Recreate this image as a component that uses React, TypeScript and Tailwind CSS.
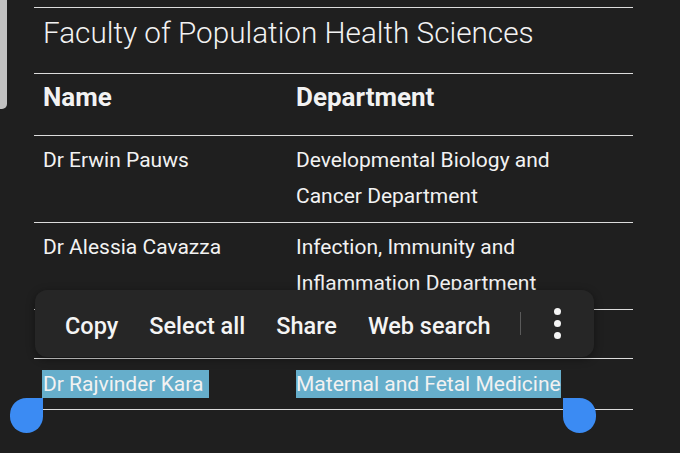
import React from "react";

type Row = { name: string; dept: string[]; pad: string; selected?: boolean };

const rows: Row[] = [
  { name: "Dr Erwin Pauws", dept: ["Developmental Biology and", "Cancer Department"], pad: "pt-[6px] pb-[8px]" },
  { name: "Dr Alessia Cavazza", dept: ["Infection, Immunity and", "Inflammation Department"], pad: "pt-[6px] pb-[8px]" },
  { name: "Dr Ruth Gilbert", dept: ["Population, Policy and Practice"], pad: "pt-[6px] pb-[6px]" },
  { name: "Dr Rajvinder Kara", dept: ["Maternal and Fetal Medicine"], pad: "pt-[7px] pb-[7px]", selected: true },
];

function SelectionHandle({ side }: { side: "left" | "right" }) {
  return (
    <div
      className={
        side === "left"
          ? "absolute left-[10px] top-[398px] w-[33px] h-[35px] rounded-full rounded-tr-none bg-[#3b8bf3]"
          : "absolute left-[563px] top-[398px] w-[33px] h-[35px] rounded-full rounded-tl-none bg-[#3b8bf3]"
      }
    />
  );
}

function TextActionMenu() {
  return (
    <div className="absolute left-[35px] top-[290px] w-[559px] h-[67px] rounded-[12px] bg-[#262626] shadow-[0_2px_8px_rgba(0,0,0,0.4)] flex items-center pl-[30px] pt-[6px] text-[23.5px] font-medium text-[#f4f4f4]">
      <span>Copy</span>
      <span className="ml-[31px]">Select all</span>
      <span className="ml-[31px]">Share</span>
      <span className="ml-[31px]">Web search</span>
      <div className="ml-auto mr-[33px] flex items-center -mt-[6px]">
        <div className="w-px h-[23px] bg-[#5a5a5a]" />
        <div className="ml-[33px] flex flex-col gap-[5px]">
          <div className="w-[7px] h-[7px] rounded-full bg-[#f4f4f4]" />
          <div className="w-[7px] h-[7px] rounded-full bg-[#f4f4f4]" />
          <div className="w-[7px] h-[7px] rounded-full bg-[#f4f4f4]" />
        </div>
      </div>
    </div>
  );
}

export default function App() {
  return (
    <div className="relative w-[680px] h-[453px] overflow-hidden bg-[#1f1f1f] text-[#f2f2f2] font-['Roboto',sans-serif]">
      {/* page scrollbar */}
      <div className="absolute left-0 top-0 w-[7px] h-[109px] rounded-br-[5px] bg-[#c2c2c2]" />

      <div className="ml-[34px] w-[599px] pt-[7px]">
        <div className="border-t border-[#dcdcdc] h-[66px] pt-[5px] pl-[9px] text-[29.7px] font-light leading-[40px]">
          Faculty of Population Health Sciences
        </div>
        <div className="border-t border-[#dcdcdc] h-[62px] grid grid-cols-[262px_1fr] items-start pt-[7px] text-[26px] font-bold leading-[32px]">
          <div className="pl-[9px]">Name</div>
          <div>Department</div>
        </div>
        {rows.map((r) => (
          <div
            key={r.name}
            className={`border-t border-[#dcdcdc] grid grid-cols-[262px_1fr] text-[21px] leading-[36px] ${r.pad}`}
          >
            <div className="pl-[9px]">
              {r.selected ? (
                <span className="bg-[#66aecb] py-[2px] pl-px pr-[6px] -ml-px">{r.name}</span>
              ) : (
                r.name
              )}
            </div>
            <div>
              {r.dept.map((d) => (
                <div key={d}>
                  {r.selected ? <span className="bg-[#66aecb] py-[2px]">{d}</span> : d}
                </div>
              ))}
            </div>
          </div>
        ))}
        <div className="border-t border-[#dcdcdc]" />
      </div>

      <TextActionMenu />
      <SelectionHandle side="left" />
      <SelectionHandle side="right" />
    </div>
  );
}
